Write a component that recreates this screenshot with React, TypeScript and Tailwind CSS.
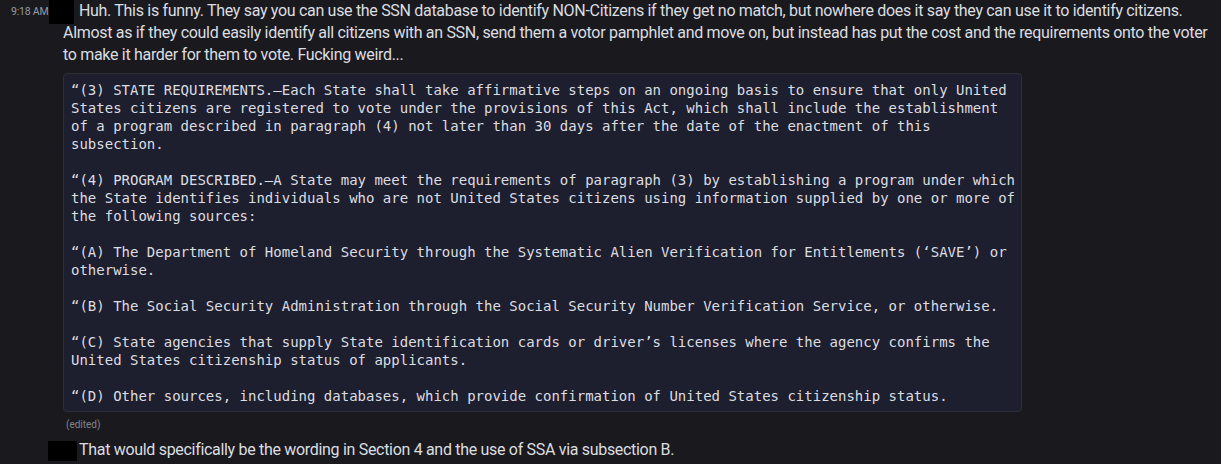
import React from "react";

const sans = { fontFamily: "Roboto, 'Noto Sans', sans-serif" };
const mono = { fontFamily: "'DejaVu Sans Mono', 'Liberation Mono', monospace" };

const code = [
  "“(3) STATE REQUIREMENTS.—Each State shall take affirmative steps on an ongoing basis to ensure that only United",
  "States citizens are registered to vote under the provisions of this Act, which shall include the establishment",
  "of a program described in paragraph (4) not later than 30 days after the date of the enactment of this",
  "subsection.",
  "",
  "“(4) PROGRAM DESCRIBED.—A State may meet the requirements of paragraph (3) by establishing a program under which",
  "the State identifies individuals who are not United States citizens using information supplied by one or more of",
  "the following sources:",
  "",
  "“(A) The Department of Homeland Security through the Systematic Alien Verification for Entitlements (‘SAVE’) or",
  "otherwise.",
  "",
  "“(B) The Social Security Administration through the Social Security Number Verification Service, or otherwise.",
  "",
  "“(C) State agencies that supply State identification cards or driver’s licenses where the agency confirms the",
  "United States citizenship status of applicants.",
  "",
  "“(D) Other sources, including databases, which provide confirmation of United States citizenship status.",
].join("\n");

export default function App() {
  return (
    <div className="flex h-[464px] w-full flex-col overflow-hidden bg-[#1a1a1e] text-[#dbdee1]" style={sans}>
      <div className="flex">
        <div className="w-[63px] shrink-0 pl-[11px] pt-[5px]">
          <span className="block text-[10.5px] leading-[14px] tracking-[-0.2px] text-[#949ba4]">9:18 AM</span>
        </div>
        <div className="flex min-w-0 flex-col">
          <div className="flex flex-col text-[16px] leading-[22px] tracking-[-0.31px] whitespace-nowrap">
            <div className="flex items-start">
              <span className="-mb-[2px] -ml-[14px] mr-[5px] h-[24px] w-[25px] shrink-0 bg-black" />
              <span>
                Huh. This is funny. They say you can use the SSN database to identify NON-Citizens if they get no match, but nowhere does it say they can use it to identify citizens.
              </span>
            </div>
            <div>
              Almost as if they could easily identify all citizens with an SSN, send them a votor pamphlet and move on, but instead has put the cost and the requirements onto the voter
            </div>
            <div>to make it harder for them to vote. Fucking weird...</div>
          </div>
          <pre
            className="mt-[7px] w-[959px] rounded-[4px] border border-[#2c2e3c] bg-[#1e1f2e] px-[7px] pt-[7px] pb-[6px] text-[14px] leading-[18px] text-[#dcdde1] whitespace-pre"
            style={mono}
          >
            {code}
          </pre>
          <div className="mt-[5px] ml-[3px] text-[10px] leading-[16px] text-[#80848e]">(edited)</div>
        </div>
      </div>
      <div className="mt-[6px] flex items-start gap-[2px] pl-[48px]">
        <span className="mt-[2px] h-[20px] w-[29px] shrink-0 bg-black" />
        <span className="text-[16px] leading-[22px] tracking-[-0.31px] whitespace-nowrap">
          That would specifically be the wording in Section 4 and the use of SSA via subsection B.
        </span>
      </div>
    </div>
  );
}
